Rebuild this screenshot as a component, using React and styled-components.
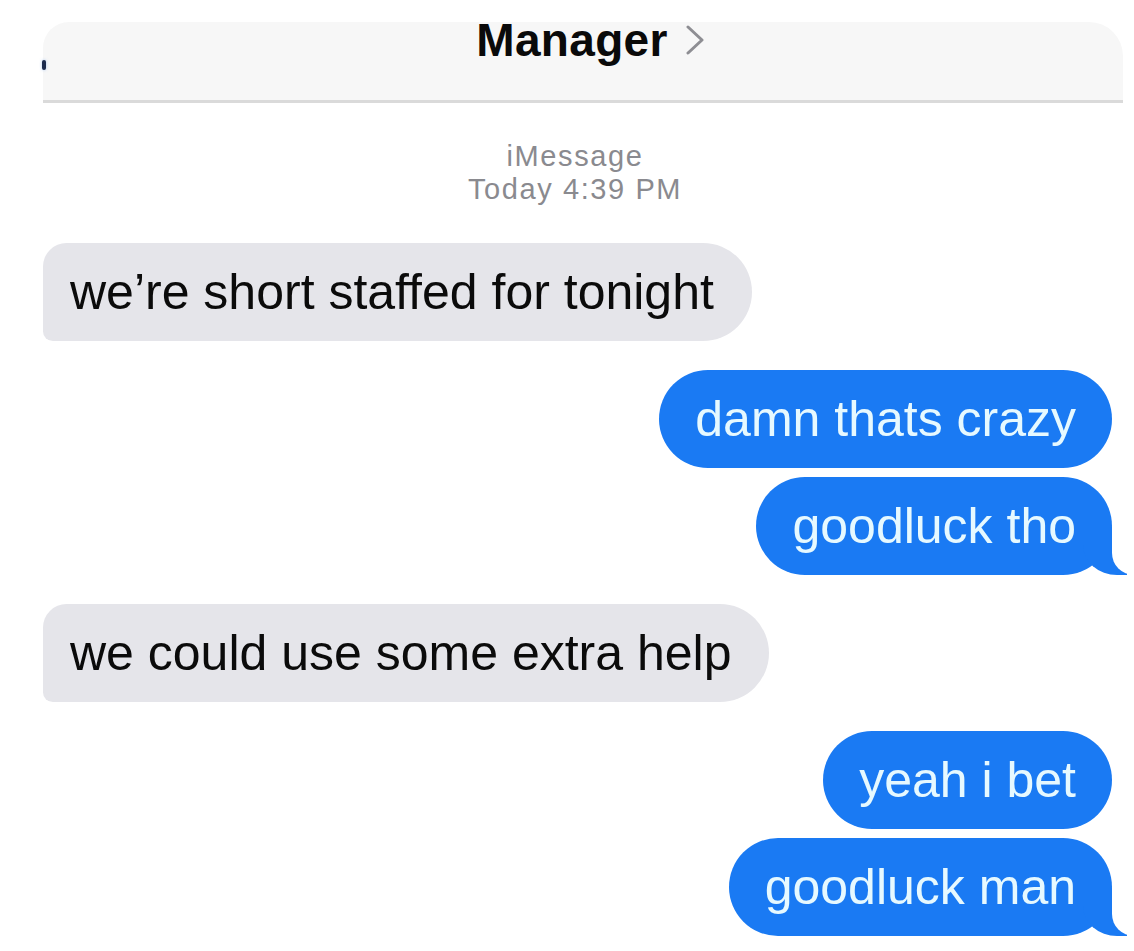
import React from "react";
import styled, { createGlobalStyle, css } from "styled-components";

const GlobalStyle = createGlobalStyle`
  html, body {
    margin: 0;
    padding: 0;
    background: #ffffff;
  }

  body {
    font-family: "Liberation Sans", Arial, Helvetica, sans-serif;
    overflow: hidden;
  }
`;

const Page = styled.div`
  width: 1134px;
  height: 951px;
  box-sizing: border-box;
  padding-top: 22px;
  background: #ffffff;
  overflow: hidden;
`;

const Screen = styled.div`
  margin-left: 43px;
  width: 1080px;
  display: flex;
  flex-direction: column;
`;

const Header = styled.header`
  position: relative;
  height: 78px;
  background: #f7f7f7;
  border-radius: 26px 34px 0 0;
  border-bottom: 3px solid #dadada;
  display: flex;
  justify-content: center;
  align-items: flex-start;
  padding-left: 15px;
`;

const BackMark = styled.span`
  position: absolute;
  left: -1px;
  top: 38px;
  width: 4px;
  height: 10px;
  border-radius: 2px;
  background: #1d2b4d;
  box-shadow: 0 0 3px rgba(90, 150, 230, 0.5);
`;

const Title = styled.div`
  display: flex;
  align-items: flex-start;
  gap: 17px;
  font-size: 46px;
  font-weight: 700;
  line-height: 36px;
  color: #0a0a0a;
  letter-spacing: 0.3px;
`;

const Chevron = styled.svg`
  margin-top: 3px;
  flex-shrink: 0;
`;

const Stamp = styled.div`
  margin-top: 37px;
  padding-right: 16px;
  display: flex;
  flex-direction: column;
  align-items: center;
  color: #8a8a8f;
  font-size: 29px;
  line-height: 33px;
  letter-spacing: 1.6px;
`;

const Thread = styled.div`
  display: flex;
  flex-direction: column;
  margin-top: 37px;
`;

const tail = css`
  &::before {
    content: "";
    position: absolute;
    bottom: 0;
    right: -15px;
    width: 44px;
    height: 48px;
    background: #1a7af3;
    border-bottom-left-radius: 34px 30px;
  }

  &::after {
    content: "";
    position: absolute;
    bottom: 0;
    right: -56px;
    width: 56px;
    height: 48px;
    background: #ffffff;
    border-bottom-left-radius: 22px;
  }
`;

const Bubble = styled.div`
  position: relative;
  align-self: ${(p) => (p.$me ? "flex-end" : "flex-start")};
  margin-top: ${(p) => (p.$grouped ? "9px" : "29px")};
  margin-right: ${(p) => (p.$me ? "11px" : "0")};
  padding: ${(p) => (p.$me ? "20px 36px" : "20px 38px 20px 27px")};
  background: ${(p) => (p.$me ? "#1a7af3" : "#e5e5ea")};
  color: ${(p) => (p.$me ? "#e6f9ff" : "#0b0b0b")};
  border-radius: ${(p) => (p.$me ? "49px" : "24px 50px 50px 10px")};
  font-size: 50px;
  line-height: 58px;
  white-space: nowrap;

  &:first-child {
    margin-top: 0;
  }

  ${(p) => p.$tail && tail}
`;

const messages = [
  { text: "we\u2019re short staffed for tonight" },
  { text: "damn thats crazy", me: true },
  { text: "goodluck tho", me: true, grouped: true, tail: true },
  { text: "we could use some extra help" },
  { text: "yeah i bet", me: true },
  { text: "goodluck man", me: true, grouped: true, tail: true },
];

export default function App() {
  return (
    <Page>
      <GlobalStyle />
      <Screen>
        <Header>
          <BackMark />
          <Title>
            Manager
            <Chevron width="20" height="30" viewBox="0 0 20 30">
              <path
                d="M3 2 L17 15 L3 28"
                fill="none"
                stroke="#8e8e93"
                strokeWidth="3"
                strokeLinecap="round"
                strokeLinejoin="round"
              />
            </Chevron>
          </Title>
        </Header>

        <Stamp>
          <span>iMessage</span>
          <span>Today 4:39 PM</span>
        </Stamp>

        <Thread>
          {messages.map((m, i) => (
            <Bubble key={i} $me={m.me} $grouped={m.grouped} $tail={m.tail}>
              {m.text}
            </Bubble>
          ))}
        </Thread>
      </Screen>
    </Page>
  );
}
